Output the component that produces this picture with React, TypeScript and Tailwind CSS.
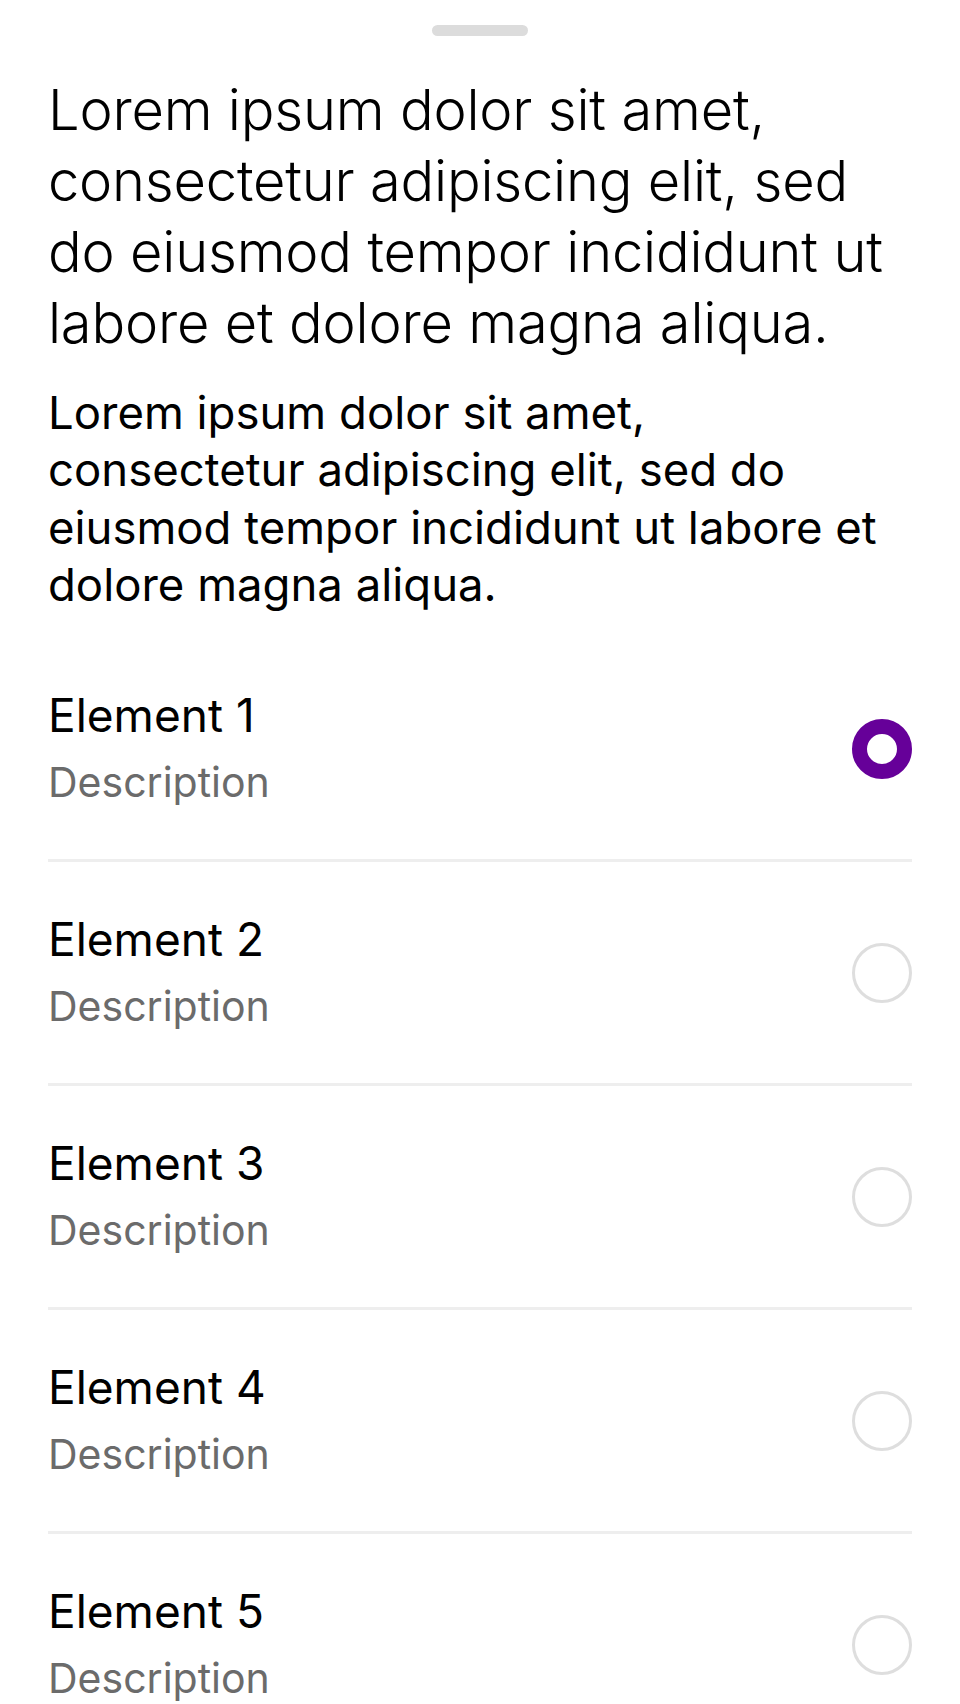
import React from "react";

interface ListItem {
    id: number;
    title: string;
    description: string;
}

const items: ListItem[] = [
    { id: 1, title: "Element 1", description: "Description" },
    { id: 2, title: "Element 2", description: "Description" },
    { id: 3, title: "Element 3", description: "Description" },
    { id: 4, title: "Element 4", description: "Description" },
    { id: 5, title: "Element 5", description: "Description" },
];

const Radio: React.FC<{ checked: boolean }> = ({ checked }) => {
    return checked ? (
        <div className="w-[60px] h-[60px] rounded-full border-[15px] border-[#660099] bg-white shrink-0" />
    ) : (
        <div className="w-[60px] h-[60px] rounded-full border-[3px] border-[#dedede] bg-white shrink-0" />
    );
};

const App: React.FC = () => {
    const selected = 1;

    return (
        <div className="w-[960px] h-[1704px] overflow-hidden bg-white font-['Inter',sans-serif] text-black">
            {/* Sheet grabber */}
            <div className="flex justify-center pt-[25px]">
                <div className="w-[96px] h-[11px] rounded-full bg-[#dcdcdc]" />
            </div>

            <div className="px-[48px]">
                {/* Header text */}
                <h1 className="mt-[39px] text-[56px] leading-[71px] font-[350] tracking-[-0.2px]">
                    Lorem ipsum dolor sit amet, consectetur adipiscing elit, sed do eiusmod tempor
                    incididunt ut labore et dolore magna aliqua.
                </h1>
                <p className="mt-[25px] text-[45.5px] leading-[57.3px] font-normal">
                    Lorem ipsum dolor sit amet, consectetur adipiscing elit, sed do eiusmod tempor
                    incididunt ut labore et dolore magna aliqua.
                </p>

                {/* Options list */}
                <div className="mt-[25px] flex flex-col">
                    {items.map((item) => (
                        <div
                            key={item.id}
                            className="flex items-center justify-between h-[224px] border-b-[3px] border-[#eeeeee]"
                        >
                            <div className="flex flex-col">
                                <div className="text-[46px] leading-[67px]">{item.title}</div>
                                <div className="text-[41px] leading-[67px] text-[#6b6b6b]">
                                    {item.description}
                                </div>
                            </div>
                            <Radio checked={item.id === selected} />
                        </div>
                    ))}
                </div>
            </div>
        </div>
    );
};

export default App;
